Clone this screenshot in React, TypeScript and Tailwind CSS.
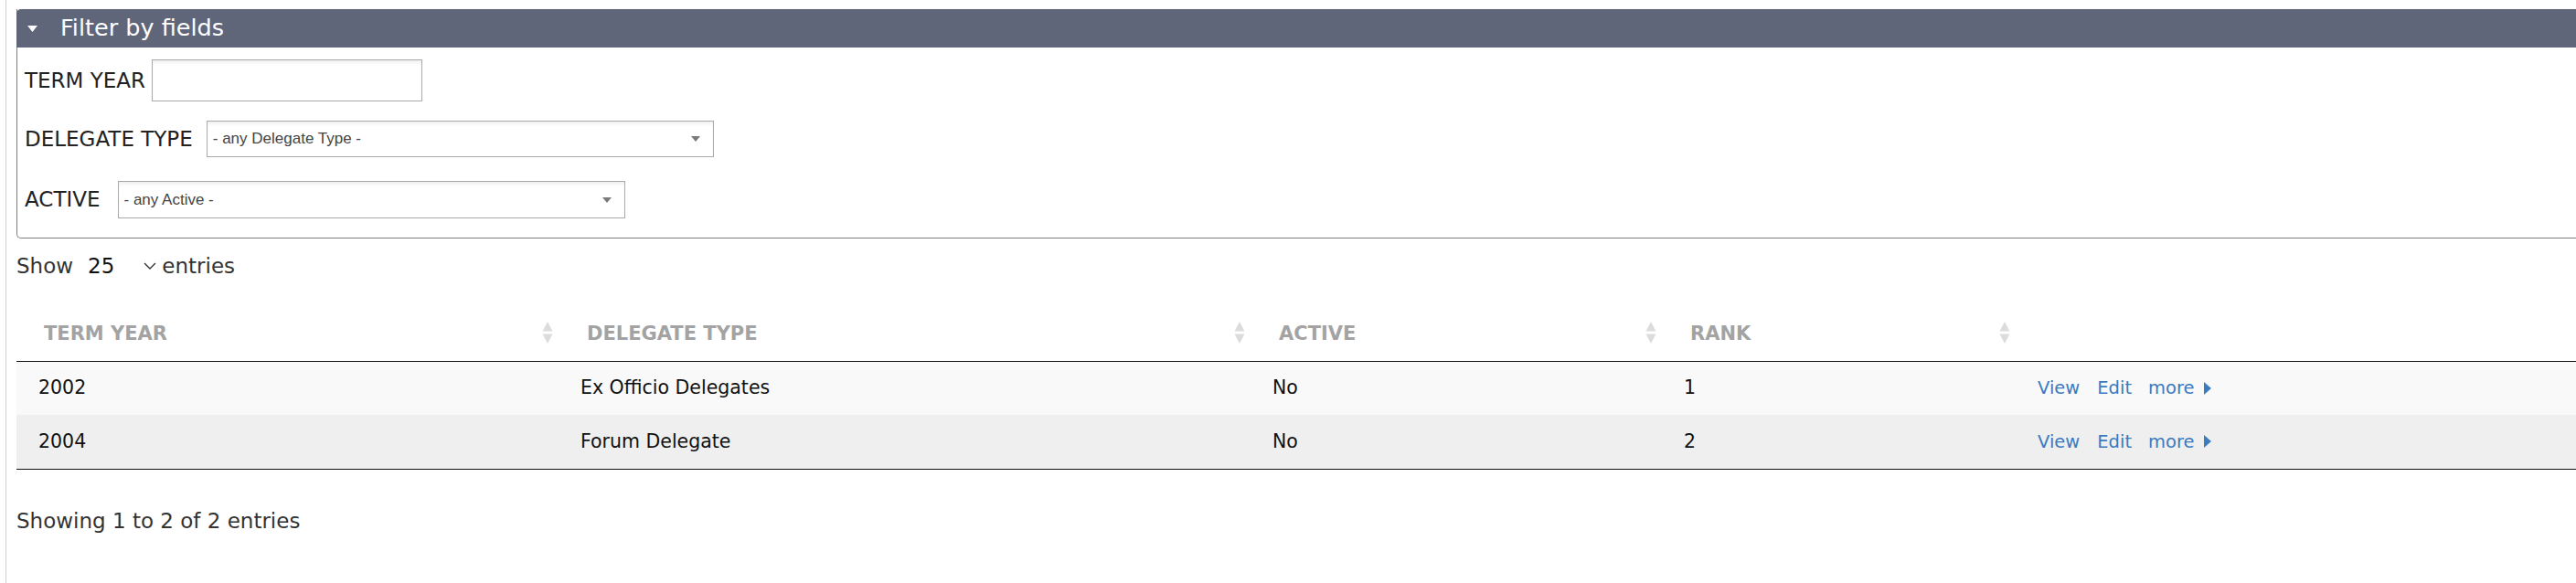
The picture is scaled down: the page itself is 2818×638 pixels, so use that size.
import React from "react";

type Row = { year: string; type: string; active: string; rank: string };

const rows: Row[] = [
  { year: "2002", type: "Ex Officio Delegates", active: "No", rank: "1" },
  { year: "2004", type: "Forum Delegate", active: "No", rank: "2" },
];

const columns = ["TERM YEAR", "DELEGATE TYPE", "ACTIVE", "RANK", ""];

function SortIcon() {
  return (
    <svg
      width="12"
      height="24"
      viewBox="0 0 12 24"
      className="absolute right-[7px] top-[34px] -translate-y-1/2"
    >
      <path d="M6 0L11.5 10.5H0.5Z" fill="#dcdcdc" />
      <path d="M6 24L11.5 13.5H0.5Z" fill="#dcdcdc" />
    </svg>
  );
}

function FakeSelect({ label, width }: { label: string; width: string }) {
  return (
    <div
      className={`flex items-center justify-between h-full border border-[#aaa] bg-white pl-[6px] pr-[14px] shadow-[inset_0_4px_4px_-2px_rgba(0,0,0,0.08)] ${width}`}
    >
      <span className="text-[17px] text-[#444] font-['Liberation_Sans',Arial,sans-serif]">
        {label}
      </span>
      <svg width="10" height="6" viewBox="0 0 10 6">
        <path d="M0 0H10L5 6Z" fill="#7a7a7a" />
      </svg>
    </div>
  );
}

export default function App() {
  return (
    <div className="w-screen h-[638px] overflow-hidden bg-white font-['DejaVu_Sans',Verdana,sans-serif] pl-[6px]">
      <div className="h-full border-l border-[#d0d0d0] pl-[11px] pt-[10px]">
        {/* filter fieldset */}
        <div className="w-[2820px] border-l border-b border-[#808080] rounded-bl-[5px]">
          <div className="h-[42px] bg-[#5f6679] rounded-tl-[5px] -ml-px flex items-center pl-[12px]">
            <svg width="11" height="7" viewBox="0 0 11 7">
              <path d="M0 0H11L5.5 7Z" fill="#ffffff" />
            </svg>
            <span className="ml-[25px] text-[25.5px] text-white leading-none">Filter by fields</span>
          </div>
          <div className="pl-[8px] pt-[13px] pb-[21px] text-[23px] text-[#222]">
            <div className="flex items-center h-[46px]">
              <span>TERM YEAR</span>
              <div className="ml-[7px] w-[296px] h-full border border-[#aaa] shadow-[inset_0_4px_4px_-2px_rgba(0,0,0,0.08)]" />
            </div>
            <div className="flex items-center h-[40px] mt-[21px]">
              <span>DELEGATE TYPE</span>
              <div className="ml-[15px] h-full">
                <FakeSelect label="- any Delegate Type -" width="w-[555px]" />
              </div>
            </div>
            <div className="flex items-center h-[41px] mt-[26px]">
              <span>ACTIVE</span>
              <div className="ml-[19px] h-full">
                <FakeSelect label="- any Active -" width="w-[555px]" />
              </div>
            </div>
          </div>
        </div>

        {/* length menu */}
        <div className="mt-[14px] flex items-center h-[32px] text-[23px] text-[#333]">
          <span>Show</span>
          <span className="ml-[16px] text-[#111]">25</span>
          <svg className="ml-[32px]" width="14" height="8" viewBox="0 0 14 8">
            <path d="M1 1L7 7L13 1" fill="none" stroke="#333" strokeWidth="1.4" />
          </svg>
          <span className="ml-[6px]">entries</span>
        </div>

        {/* table */}
        <table className="mt-[23px] w-[2810px] table-fixed border-collapse">
          <colgroup>
            <col className="w-[594px]" />
            <col className="w-[757px]" />
            <col className="w-[450px]" />
            <col className="w-[387px]" />
            <col />
          </colgroup>
          <thead>
            <tr className="border-b border-[#111]">
              {columns.map((c, i) => (
                <th
                  key={i}
                  className="relative h-[65px] pl-[30px] pt-[6px] text-left align-middle text-[21px] font-bold text-[#a3a3a3]"
                >
                  {c}
                  {i < 4 && <SortIcon />}
                </th>
              ))}
            </tr>
          </thead>
          <tbody className="text-[20.5px] text-[#111]">
            {rows.map((r, i) => (
              <tr key={r.year} className={i % 2 === 0 ? "bg-[#f9f9f9]" : "bg-[#efefef]"}>
                <td className="h-[59px] pl-[24px]">{r.year}</td>
                <td className="pl-[23px]">{r.type}</td>
                <td className="pl-[23px]">{r.active}</td>
                <td className="pl-[23px]">{r.rank}</td>
                <td className="pl-[23px]">
                  <div className="flex items-center text-[#3b7bc0] text-[19.5px]">
                    <span>View</span>
                    <span className="ml-[19px]">Edit</span>
                    <span className="ml-[18px]">more</span>
                    <svg className="ml-[10px]" width="8" height="14" viewBox="0 0 8 14">
                      <path d="M0 0L8 7L0 14Z" fill="#3b7bc0" />
                    </svg>
                  </div>
                </td>
              </tr>
            ))}
            <tr className="border-t border-[#111]">
              <td colSpan={5} className="h-0 p-0" />
            </tr>
          </tbody>
        </table>

        <div className="mt-[41px] h-[32px] flex items-center text-[23px] text-[#333]">
          Showing 1 to 2 of 2 entries
        </div>
      </div>
    </div>
  );
}
